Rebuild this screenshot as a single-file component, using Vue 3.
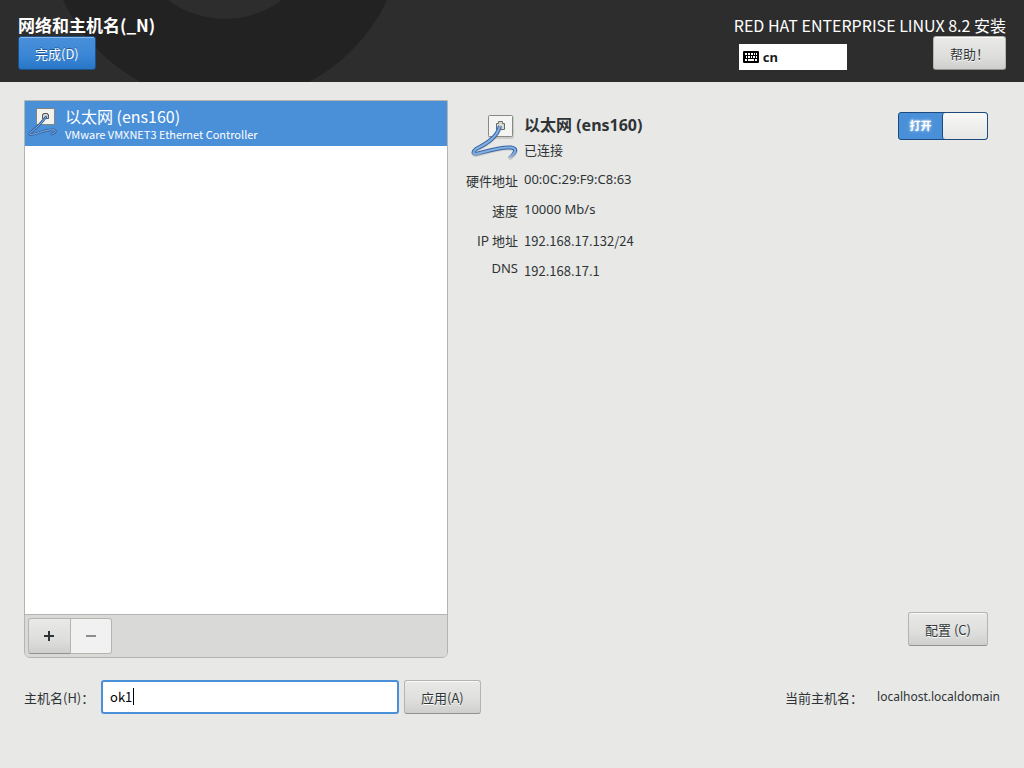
<script setup>
import { ref } from 'vue'

const hostname = ref('ok1')
const switchOn = ref(true)
const details = [
  { label: '硬件地址', value: '00:0C:29:F9:C8:63' },
  { label: '速度', value: '10000 Mb/s' },
  { label: 'IP 地址', value: '192.168.17.132/24', cjk: true },
  { label: 'DNS', value: '192.168.17.1', cjk: true, latinLabel: true },
]
</script>

<template>
  <div class="page">
    <header class="topbar">
      <svg class="rings" width="400" height="82" viewBox="0 0 400 82" aria-hidden="true">
        <circle cx="225" cy="-76" r="137" fill="none" stroke="#222222" stroke-width="84" />
      </svg>
      <div class="top-left">
        <h1>网络和主机名(_N)</h1>
        <button type="button" class="btn primary">完成(D)</button>
      </div>
      <div class="top-right">
        <div class="product">RED HAT ENTERPRISE LINUX 8.2 安装</div>
        <div class="top-row">
          <div class="layout">
            <svg width="16" height="12" viewBox="0 0 16 12" aria-hidden="true">
              <rect width="16" height="12" rx="1" fill="#000" />
              <path
                d="M2 2h2v2H2zM5 2h2v2H5zM8 2h2v2H8zM11 2h1v2h-1zM13 2h1v2h-1zM3 5h1v2H3zM5 5h2v2H5zM8 5h1v2H8zM10 5h2v2h-2zM13 5h1v2h-1zM2 8h2v2H2zM5 8h6v2H5zM12 8h2v2h-2z"
                fill="#fff"
              />
            </svg>
            <span>cn</span>
          </div>
          <button type="button" class="btn help">帮助！</button>
        </div>
      </div>
    </header>

    <main class="content">
      <section class="devices">
        <ul class="list">
          <li class="device">
            <svg width="32" height="32" viewBox="0 0 32 32" aria-hidden="true">
              <rect x="9.500" y="1.500" width="18" height="16" fill="#f1f1ee" stroke="#85867f" />
              <path d="M15.500 11.500v-4h1v-1h4v1h1v4z" fill="#d8d8d4" stroke="#555753" />
              <g fill="none" stroke-linecap="round">
                <path d="M19 10C16 14 12 19 3 26c-1 2 1 2 4 1 8-2 14-5 20-4 3 1 1 3-2 4" stroke="#3465a4" stroke-width="2.600" />
                <path d="M19 10C16 14 12 19 3 26c-1 2 1 2 4 1 8-2 14-5 20-4 3 1 1 3-2 4" stroke="#84aee0" stroke-width="1" />
              </g>
            </svg>
            <div class="device-text">
              <span class="device-name">以太网 (ens160)</span>
              <span class="device-sub">VMware VMXNET3 Ethernet Controller</span>
            </div>
          </li>
        </ul>
        <div class="toolbar">
          <button type="button" class="tool add" aria-label="+">
            <svg width="12" height="12" viewBox="0 0 12 12"><path d="M1 5h4V1h2v4h4v2H7v4H5V7H1z" fill="#2e3436" /></svg>
          </button>
          <button type="button" class="tool remove" disabled aria-label="−">
            <svg width="12" height="12" viewBox="0 0 12 12"><path d="M1 5h10v2H1z" fill="#8b8e8f" /></svg>
          </button>
        </div>
      </section>

      <section class="info">
        <div class="info-head">
          <svg class="big-icon" width="48" height="48" viewBox="0 0 48 48" aria-hidden="true">
            <defs>
              <linearGradient id="cable-dark" gradientUnits="userSpaceOnUse" x1="0" y1="40" x2="0" y2="47">
                <stop offset="0" stop-color="#3465a4" />
                <stop offset="1" stop-color="#3465a4" stop-opacity="0" />
              </linearGradient>
              <linearGradient id="cable-light" gradientUnits="userSpaceOnUse" x1="0" y1="42" x2="0" y2="47">
                <stop offset="0" stop-color="#84aee0" />
                <stop offset="1" stop-color="#84aee0" stop-opacity="0" />
              </linearGradient>
            </defs>
            <rect x="18" y="4" width="26" height="23" rx="2" fill="#000" opacity=".12" />
            <rect x="18.500" y="3.500" width="24" height="21" rx="1" fill="#f4f4f2" stroke="#888a85" />
            <path d="M26.500 17.500v-6h2v-2h4v2h2v6z" fill="#d8d8d4" stroke="#6a6c68" />
            <g fill="none">
              <path d="M30 15C27 25 18 31 6 37c-4 3-3 6 2 4.500 11-3 23-7 33-6 6 1 6 4-2 11" stroke="#000" stroke-width="4" opacity=".1" transform="translate(0 1)" />
              <path d="M30 14C27 25 18 31 6 37c-4 3-3 6 2 4.500 11-3 23-7 33-6 6 1 6 4-2 11" stroke="url(#cable-dark)" stroke-width="4" />
              <path d="M30 14C27 25 18 31 6 37c-4 3-3 6 2 4.500 11-3 23-7 33-6 6 1 6 4-2 11" stroke="url(#cable-light)" stroke-width="2" />
            </g>
          </svg>
          <div class="info-title">
            <h2>以太网 (ens160)</h2>
            <p>已连接</p>
          </div>
          <button type="button" class="switch" role="switch" :aria-checked="switchOn" @click="switchOn = !switchOn">
            <span class="switch-label">打开</span>
            <span class="knob"></span>
          </button>
        </div>
        <dl class="details">
          <template v-for="d in details" :key="d.label">
            <dt :class="{ latin: d.latinLabel }">{{ d.label }}</dt>
            <dd :class="{ cjk: d.cjk }">{{ d.value }}</dd>
          </template>
        </dl>
        <button type="button" class="btn configure">配置 (C)</button>
      </section>
    </main>

    <footer class="hostbar">
      <label for="host">主机名(H)：</label>
      <div class="field">
        <input id="host" v-model="hostname" type="text" spellcheck="false" autocomplete="off" />
        <span class="caret" aria-hidden="true"></span>
      </div>
      <button type="button" class="btn">应用(A)</button>
      <span class="current-label">当前主机名：</span>
      <span class="current">localhost.localdomain</span>
    </footer>
  </div>
</template>

<style>
body {
  background: #e8e8e6;
}
</style>

<style scoped>
.page {
  min-height: 100vh;
  box-sizing: border-box;
  display: flex;
  flex-direction: column;
  padding-bottom: 54px;
  font-family: "Noto Sans CJK SC", sans-serif;
  font-size: 13px;
  line-height: 20px;
  color: #2e3436;
}
h1, h2, p, ul, dl, dd {
  margin: 0;
  padding: 0;
}
button, input {
  font: inherit;
  color: inherit;
  box-sizing: border-box;
}
.topbar {
  position: relative;
  display: flex;
  justify-content: space-between;
  height: 82px;
  box-sizing: border-box;
  padding: 12px 18px;
  background: #2d2d2d;
  color: #fff;
}
.rings {
  position: absolute;
  left: 0;
  top: 0;
}
.top-left {
  position: relative;
}
h1 {
  height: 24px;
  font-size: 17px;
  line-height: 26px;
}
.product {
  height: 24px;
  font-size: 16px;
  line-height: 26px;
}
.top-row {
  display: flex;
  justify-content: space-between;
  align-items: flex-start;
  padding-left: 5px;
}
.layout {
  display: flex;
  align-items: center;
  gap: 4px;
  width: 108px;
  height: 26px;
  margin-top: 8px;
  padding-left: 4px;
  box-sizing: border-box;
  background: #fff;
  color: #1a1a1a;
  font-family: "Noto Sans", sans-serif;
  font-weight: 700;
}
.btn {
  height: 34px;
  padding: 2px 16px 0;
  border: 1px solid #b4b4b0;
  border-bottom-color: #91918c;
  border-radius: 3px;
  background: linear-gradient(#e9e9e7, #dededc 60%, #cfcfcd);
  box-shadow: inset 0 1px #f8f8f7;
  color: #2e3436;
  text-shadow: 0 1px #fff;
  white-space: nowrap;
}
.primary {
  border-color: #1c5187;
  background: linear-gradient(#4a90d9, #3a86d6 60%, #2a76c6);
  box-shadow: inset 0 1px #8bb8e7;
  color: #fff;
  text-shadow: 0 -1px #1f5894;
}
.content {
  flex: 1;
  display: grid;
  grid-template-columns: 424fr 540fr;
  gap: 18px;
  padding: 18px 18px 0 24px;
}
.devices {
  display: flex;
  flex-direction: column;
  border: 1px solid #b4b4b0;
  border-radius: 0 0 6px 6px;
  overflow: hidden;
}
.list {
  flex: 1;
  background: #fff;
  list-style: none;
}
.device {
  display: flex;
  gap: 6px;
  height: 45px;
  padding: 6px 2px 0;
  box-sizing: border-box;
  background: #4a90d9;
  color: #fff;
}
.device-text {
  display: flex;
  flex-direction: column;
}
.device-name {
  font-size: 16px;
  line-height: 19px;
}
.device-sub {
  font-size: 11px;
  line-height: 16px;
}
.toolbar {
  display: flex;
  padding: 3px;
  border-top: 1px solid #b4b4b0;
  background: #d9d9d7;
}
.tool {
  display: flex;
  align-items: center;
  justify-content: center;
  width: 41px;
  height: 36px;
  padding: 0;
  border: 1px solid #b4b4b0;
}
.add {
  width: 43px;
  padding-right: 1px;
  border-bottom-color: #91918c;
  border-radius: 3px 0 0 3px;
  background: linear-gradient(#e9e9e7, #dededc 60%, #cfcfcd);
}
.remove {
  border-left: 0;
  border-radius: 0 3px 3px 0;
  background: #f1f1f1;
}
.info {
  display: flex;
  flex-direction: column;
  padding: 12px 18px 12px 0;
}
.info-head {
  display: flex;
  align-items: flex-start;
  gap: 6px;
  padding-left: 4px;
}
.info-title {
  flex: 1;
}
.info-title h2 {
  font-family: "Noto Sans", "Noto Sans CJK SC", sans-serif;
  font-size: 16px;
  line-height: 26px;
}
.info-title p {
  line-height: 24px;
}
.switch {
  display: flex;
  width: 90px;
  height: 28px;
  padding: 0;
  border: 1px solid #1c4a7e;
  border-radius: 3px;
  background: #4a90d9;
}
.switch-label {
  flex: 1;
  color: #fff;
  font-size: 11px;
  font-weight: 700;
  line-height: 24px;
  text-shadow: 0 0 3px #fff;
}
.knob {
  width: 44px;
  height: 26px;
  border-left: 1px solid #1c4a7e;
  border-radius: 3px;
  background: linear-gradient(#f8f8f7, #e6e6e4);
}
.details {
  display: grid;
  grid-template-columns: 52px 1fr;
  column-gap: 6px;
  grid-auto-rows: 30px;
  margin-top: 3px;
  line-height: 32px;
}
dt {
  text-align: right;
}
dd {
  font-family: "Noto Sans", sans-serif;
  line-height: 28px;
}
.cjk {
  font-family: "Noto Sans CJK SC", sans-serif;
  line-height: 32px;
}
.latin {
  font-family: "Noto Sans", sans-serif;
  line-height: 26px;
}
.configure {
  align-self: flex-end;
  margin-top: auto;
}
.hostbar {
  display: flex;
  align-items: center;
  padding: 22px 24px 0;
}
.hostbar label {
  width: 77px;
  padding-top: 2px;
  white-space: nowrap;
}
.field {
  position: relative;
  display: flex;
  width: 298px;
  margin-right: 5px;
}
.field input {
  width: 100%;
  height: 34px;
  padding: 0 7px 2px;
  border: 2px solid #4a90d9;
  border-radius: 3px;
  outline: 0;
  background: #fff;
  color: #000;
}
.caret {
  position: absolute;
  left: 32px;
  top: 8px;
  width: 1px;
  height: 17px;
  background: #000;
}
.current-label {
  margin-left: auto;
  padding-top: 2px;
}
.current {
  margin-left: 14px;
  font-family: "Noto Sans", sans-serif;
  font-size: 12px;
}
</style>
